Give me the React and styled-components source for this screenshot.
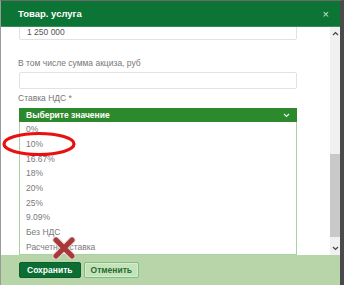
import React from 'react';
import styled, { createGlobalStyle } from 'styled-components';

const Global = createGlobalStyle`
  html, body { margin: 0; padding: 0; background: #fff; }
  body { font-family: 'Liberation Sans', Arial, sans-serif; }
`;

const Dialog = styled.div`
  width: 344px;
  height: 285px;
  box-sizing: border-box;
  display: flex;
  flex-direction: column;
  border-left: 1px solid #9a9a9a;
  border-right: 4px solid #4a4a4a;
  border-top: 1px solid #6a6a6a;
  overflow: hidden;
  position: relative;
`;

const Header = styled.div`
  height: 25px;
  flex: none;
  background: #0c7434;
  display: flex;
  align-items: center;
  justify-content: space-between;
  padding: 0 11px 0 17px;
  color: #fff;
  font-weight: bold;
  font-size: 9.5px;
  position: relative;
  z-index: 2;
  box-shadow: 0 1px 0 #3c8c57;
`;

const Close = styled.span`
  font-weight: normal;
  font-size: 11px;
  color: #cfe3d5;
`;

const Body = styled.div`
  flex: 1;
  display: flex;
  min-height: 0;
`;

const Content = styled.div`
  flex: 1;
  overflow: hidden;
  padding: 0 33px 0 17px;
`;

const Scroller = styled.div`
  margin-top: -3px;
`;

const Input = styled.div`
  height: 17px;
  box-sizing: border-box;
  border: 1px solid #e2e2e2;
  border-radius: 2px;
  margin-left: 1px;
  padding: 0 7px;
  display: flex;
  align-items: center;
  font-size: 8.5px;
  color: #555;
`;

const Label = styled.div`
  font-size: 8.5px;
  line-height: 10px;
  color: #777;
  margin: ${(p) => p.$top}px 0 ${(p) => p.$bottom}px;
`;

const Select = styled.div`
  margin-left: 1px;
`;

const SelectHead = styled.div`
  height: 14px;
  background: #2c8a2c;
  color: #fff;
  font-weight: bold;
  font-size: 8.5px;
  display: flex;
  align-items: center;
  justify-content: space-between;
  padding: 0 7px;
  position: relative;
  z-index: 1;
`;

const List = styled.div`
  border: 1px solid #a8d3a0;
  border-top: none;
  height: 133px;
  box-sizing: border-box;
  overflow: hidden;
  background: #fff;
`;

const Options = styled.div`
  margin-top: 0;
  padding-left: 6px;
`;

const Option = styled.div`
  height: 14.7px;
  display: flex;
  align-items: center;
  font-size: 8.5px;
  color: #7a7a7a;
`;

const Scrollbar = styled.div`
  width: 10px;
  flex: none;
  background: #f1f1f1;
  display: flex;
  flex-direction: column;
  align-items: center;
`;

const Arrow = styled.div`
  height: 14px;
  display: flex;
  align-items: center;
  justify-content: center;
`;

const Track = styled.div`
  flex: 1;
  width: 100%;
  display: flex;
  flex-direction: column;
  justify-content: flex-end;
`;

const Thumb = styled.div`
  height: 83px;
  background: #c9c9c9;
  margin-bottom: 4px;
`;

const Footer = styled.div`
  height: 30px;
  flex: none;
  background: #b7d5a9;
  display: flex;
  align-items: center;
  gap: 3px;
  padding: 0 0 0 18px;
  position: relative;
  z-index: 2;
`;

const Button = styled.button`
  height: 16px;
  padding: 0 ${(p) => (p.$primary ? 7 : 6)}px;
  font-family: inherit;
  font-weight: bold;
  font-size: 8.5px;
  border-radius: 2px;
  border: 1px solid ${(p) => (p.$primary ? '#0a5e2a' : '#7fbf7c')};
  background: ${(p) => (p.$primary ? '#0c6e32' : '#c6e2bb')};
  color: ${(p) => (p.$primary ? '#fff' : '#1f6e2e')};
  box-shadow: ${(p) => (p.$primary ? 'none' : 'inset 0 0 0 1px #d8ecd0')};
`;

const Ellipse = styled.svg`
  position: absolute;
  left: 1px;
  top: 130px;
  z-index: 3;
`;

const Cross = styled.svg`
  position: absolute;
  left: 51px;
  top: 236px;
  z-index: 3;
`;

const rates = ['0%', '10%', '16.67%', '18%', '20%', '25%', '9.09%', 'Без НДС', 'Расчетная ставка'];

const Chevron = ({ up, color = '#444' }) => (
  <svg width="7" height="5" viewBox="0 0 7 5">
    <path d={up ? 'M1 4 L3.5 1.5 L6 4' : 'M1 1 L3.5 3.5 L6 1'} fill="none" stroke={color} strokeWidth="1.2" />
  </svg>
);

export default function App() {
  return (
    <>
      <Global />
      <Dialog>
        <Header>
          <span>Товар. услуга</span>
          <Close>×</Close>
        </Header>
        <Body>
          <Content>
            <Scroller>
              <Input>1 250 000</Input>
              <Label $top={18} $bottom={4}>В том числе сумма акциза, руб</Label>
              <Input />
              <Label $top={4} $bottom={5}>Ставка НДС *</Label>
              <Select>
                <SelectHead>
                  <span>Выберите значение</span>
                  <Chevron color="#e8f3e8" />
                </SelectHead>
                <List>
                  <Options>
                    {rates.map((r) => (
                      <Option key={r}>{r}</Option>
                    ))}
                  </Options>
                </List>
              </Select>
            </Scroller>
          </Content>
          <Scrollbar>
            <Arrow><Chevron up /></Arrow>
            <Track><Thumb /></Track>
            <Arrow><Chevron /></Arrow>
          </Scrollbar>
        </Body>
        <Footer>
          <Button $primary>Сохранить</Button>
          <Button>Отменить</Button>
        </Footer>
        <Ellipse width="74" height="26" viewBox="0 0 74 26">
          <ellipse cx="37" cy="13" rx="35" ry="10.5" fill="none" stroke="#e81010" strokeWidth="3.2" />
        </Ellipse>
        <Cross width="24" height="22" viewBox="0 0 24 22">
          <path d="M4 3 L20 19 M20 3 L4 19" stroke="#e9d2d2" strokeWidth="7" strokeLinecap="round" />
          <path d="M4 3 L20 19 M20 3 L4 19" stroke="#a63a3a" strokeWidth="5" strokeLinecap="round" />
        </Cross>
      </Dialog>
    </>
  );
}
